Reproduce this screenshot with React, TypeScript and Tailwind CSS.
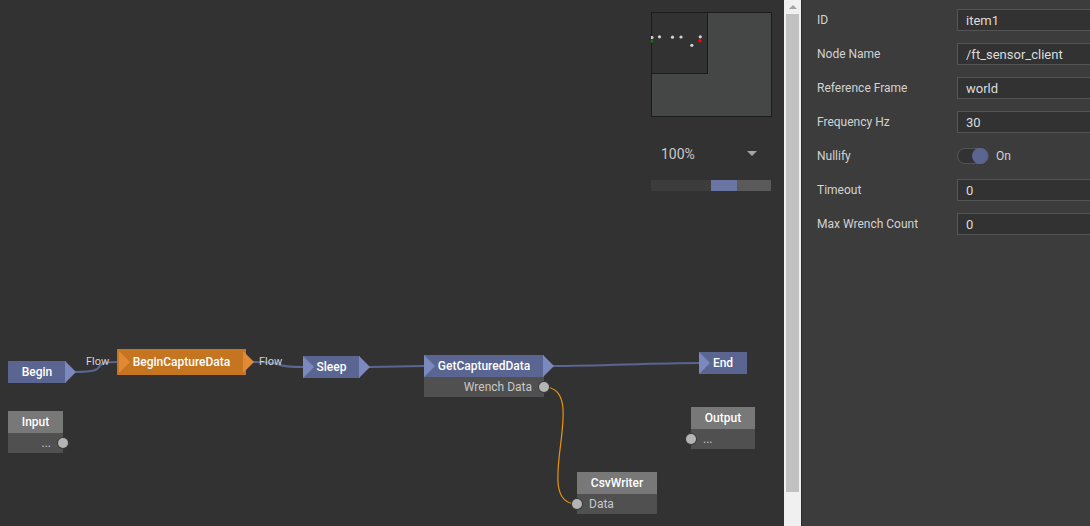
import React, { useState } from "react";

type Tone = "flow" | "active" | "data";

interface GraphNode {
  name: string;
  place: string;
  tone: Tone;
  hasIn?: boolean;
  hasOut?: boolean;
  port?: { label: string; side: "left" | "right" };
}

const nodes: GraphNode[] = [
  { name: "Begin", place: "left-[8px] top-[361px] w-[58px]", tone: "flow", hasOut: true },
  { name: "BeginCaptureData", place: "left-[117px] top-[349px] w-[129px]", tone: "active", hasIn: true, hasOut: true },
  { name: "Sleep", place: "left-[303px] top-[356px] w-[57px]", tone: "flow", hasIn: true, hasOut: true },
  {
    name: "GetCapturedData",
    place: "left-[424px] top-[355px] w-[120px]",
    tone: "flow",
    hasIn: true,
    hasOut: true,
    port: { label: "Wrench Data", side: "right" },
  },
  { name: "End", place: "left-[699px] top-[352px] w-[48px]", tone: "flow", hasIn: true },
  { name: "Input", place: "left-[8px] top-[411px] w-[55px]", tone: "data", port: { label: "...", side: "right" } },
  { name: "Output", place: "left-[691px] top-[407px] w-[64px]", tone: "data", port: { label: "...", side: "left" } },
  { name: "CsvWriter", place: "left-[577px] top-[472px] w-[80px]", tone: "data", port: { label: "Data", side: "left" } },
];

const headerTone: Record<Tone, string> = {
  flow: "h-[22px] bg-[#5a6591]",
  active: "h-[26px] bg-[#c57420]",
  data: "h-[22px] bg-[#787878]",
};

function Arrow({ tone, className }: { tone: Tone; className: string }) {
  return (
    <svg
      viewBox="0 0 11 22"
      aria-hidden="true"
      className={`absolute h-[22px] w-[11px] ${tone === "active" ? "top-[2px] fill-[#e08a35]" : "top-0 fill-[#7c89be]"} ${className}`}
    >
      <path d="M0 0 L11 11 L0 22 Z" />
    </svg>
  );
}

function NodeBox({ node }: { node: GraphNode }) {
  const { tone, port } = node;
  return (
    <div className={`absolute text-xs ${node.place}`}>
      <div className={`relative flex items-center justify-center font-medium text-white ${headerTone[tone]}`}>
        {node.hasIn && <Arrow tone={tone} className={tone === "active" ? "left-[2px]" : "left-0"} />}
        <span>{node.name}</span>
        {node.hasOut && <Arrow tone={tone} className={tone === "active" ? "-right-2" : "-right-2.5"} />}
      </div>
      {port && (
        <div
          className={`relative flex h-5 items-center bg-[#505050] px-3 text-[#c8c8c8] ${
            port.side === "right" ? "justify-end" : "justify-start"
          }`}
        >
          {port.label}
          <span
            className={`absolute top-[5px] size-[10px] rounded-full bg-[#b4b4b4] ring-1 ring-[#3c3c3c] ${
              port.side === "right" ? "-right-[5px]" : "-left-[5px]"
            }`}
          />
        </div>
      )}
    </div>
  );
}

function Wires() {
  return (
    <svg className="absolute inset-0 size-full" fill="none" aria-hidden="true">
      <g stroke="#5a6591" strokeWidth="2">
        <path d="M75 372 C115 372 85 362 118 362" />
        <path d="M253 362 C293 362 264 367 304 367" />
        <path d="M369 367 C400 367 393 366 425 366" />
        <path d="M553 366 C600 366 652 363 700 363" />
      </g>
      <path d="M544 387 C592 387 529 504 577 504" stroke="#e8960c" strokeWidth="1.2" />
    </svg>
  );
}

function MiniMap() {
  return (
    <svg viewBox="0 0 121 105" className="h-[105px] w-[121px]" role="img" aria-label="Overview">
      <rect x="0.5" y="0.5" width="120" height="104" fill="#454746" stroke="#1c1c1c" />
      <rect x="0.5" y="0.5" width="56" height="61" fill="#323232" stroke="#1c1c1c" />
      <g fill="#d2d2d2">
        <path d="M0 24h1a1.5 1.5 0 0 1 0 3h-1z" />
        <circle cx="8.5" cy="24.8" r="1.6" />
        <circle cx="21.5" cy="25.2" r="1.6" />
        <circle cx="30" cy="25" r="1.6" />
        <circle cx="40.8" cy="33.3" r="1.6" />
        <circle cx="49.3" cy="24.8" r="1.6" />
      </g>
      <rect x="0" y="27.5" width="2" height="3" fill="#087c08" />
      <circle cx="49" cy="28.8" r="1.8" fill="#ff0000" />
    </svg>
  );
}

function ViewControls() {
  const [zoom, setZoom] = useState("100%");
  return (
    <div className="absolute right-3 top-3 flex w-[121px] flex-col">
      <MiniMap />
      <div className="relative mt-[25px] h-[22px] w-[120px]">
        <select
          aria-label="Zoom"
          value={zoom}
          onChange={(e) => setZoom(e.target.value)}
          className="size-full appearance-none bg-transparent pl-2.5 text-sm text-[#c8c8c8] outline-none"
        >
          <option>50%</option>
          <option>100%</option>
          <option>200%</option>
        </select>
        <svg viewBox="0 0 10 5" className="pointer-events-none absolute right-3.5 top-[9px] h-[5px] w-[10px] fill-[#a5a5a5]" aria-hidden="true">
          <path d="M0 0H10L5 5Z" />
        </svg>
      </div>
      <input
        type="range"
        aria-label="Zoom level"
        min={0}
        max={94}
        defaultValue={60}
        className="mt-4 h-[11px] w-[120px] appearance-none bg-linear-to-r from-[#3c3c3c] from-55% to-[#5a5a5a] to-55% [&::-webkit-slider-thumb]:h-[11px] [&::-webkit-slider-thumb]:w-[26px] [&::-webkit-slider-thumb]:appearance-none [&::-webkit-slider-thumb]:bg-[#6a75a3]"
      />
    </div>
  );
}

function ScrollBar() {
  return (
    <div className="flex w-[17px] shrink-0 flex-col bg-[#f0f0f0] px-0.5" aria-hidden="true">
      <div className="flex h-3.5 shrink-0 items-center justify-center">
        <svg viewBox="0 0 8 4" className="h-1 w-2 fill-[#a3a3a3]">
          <path d="M0 4L4 0L8 4Z" />
        </svg>
      </div>
      <div className="mb-[34px] grow bg-[#c1c1c1]" />
    </div>
  );
}

function Field({ id, label, children }: { id: string; label: string; children: React.ReactNode }) {
  return (
    <div className="flex h-[22px] items-center">
      <label htmlFor={id} className="w-[140px] shrink-0 text-xs text-[#d2d2d2]">
        {label}
      </label>
      {children}
    </div>
  );
}

function TextField({ id, label, value }: { id: string; label: string; value: string }) {
  return (
    <Field id={id} label={label}>
      <input
        id={id}
        type="text"
        defaultValue={value}
        className="h-[22px] min-w-0 grow border border-r-0 border-[#555555] bg-[#323232] px-2 text-[13px] text-[#dcdcdc] outline-none"
      />
    </Field>
  );
}

function Properties() {
  const [nullify, setNullify] = useState(true);
  return (
    <aside className="w-[289px] shrink-0 border-l border-[#2a2a2a] bg-[#3c3c3c] pl-[15px] pt-[9px]">
      <form className="flex flex-col gap-3">
        <TextField id="item-id" label="ID" value="item1" />
        <TextField id="node-name" label="Node Name" value="/ft_sensor_client" />
        <TextField id="reference-frame" label="Reference Frame" value="world" />
        <TextField id="frequency" label="Frequency Hz" value="30" />
        <Field id="nullify" label="Nullify">
          <input
            id="nullify"
            type="checkbox"
            role="switch"
            checked={nullify}
            onChange={(e) => setNullify(e.target.checked)}
            className="flex h-4 w-8 appearance-none items-center rounded-full border border-[#555555] bg-[#323232] before:-my-px before:size-4 before:rounded-full before:bg-[#787878] checked:justify-end checked:before:bg-[#5a6591]"
          />
          <span className="ml-[7px] text-xs text-[#d2d2d2]">{nullify ? "On" : "Off"}</span>
        </Field>
        <TextField id="timeout" label="Timeout" value="0" />
        <TextField id="max-wrench" label="Max Wrench Count" value="0" />
      </form>
    </aside>
  );
}

export default function App() {
  return (
    <div className="flex h-screen overflow-hidden bg-[#323232] font-['Roboto',sans-serif]">
      <main className="relative min-w-0 grow overflow-hidden">
        <Wires />
        {nodes.map((node) => (
          <NodeBox key={node.name} node={node} />
        ))}
        <span className="absolute left-[86px] top-[354px] text-[11px] leading-4 text-[#d2d2d2]">Flow</span>
        <span className="absolute left-[259px] top-[354px] text-[11px] leading-4 text-[#d2d2d2]">Flow</span>
        <ViewControls />
      </main>
      <ScrollBar />
      <Properties />
    </div>
  );
}
